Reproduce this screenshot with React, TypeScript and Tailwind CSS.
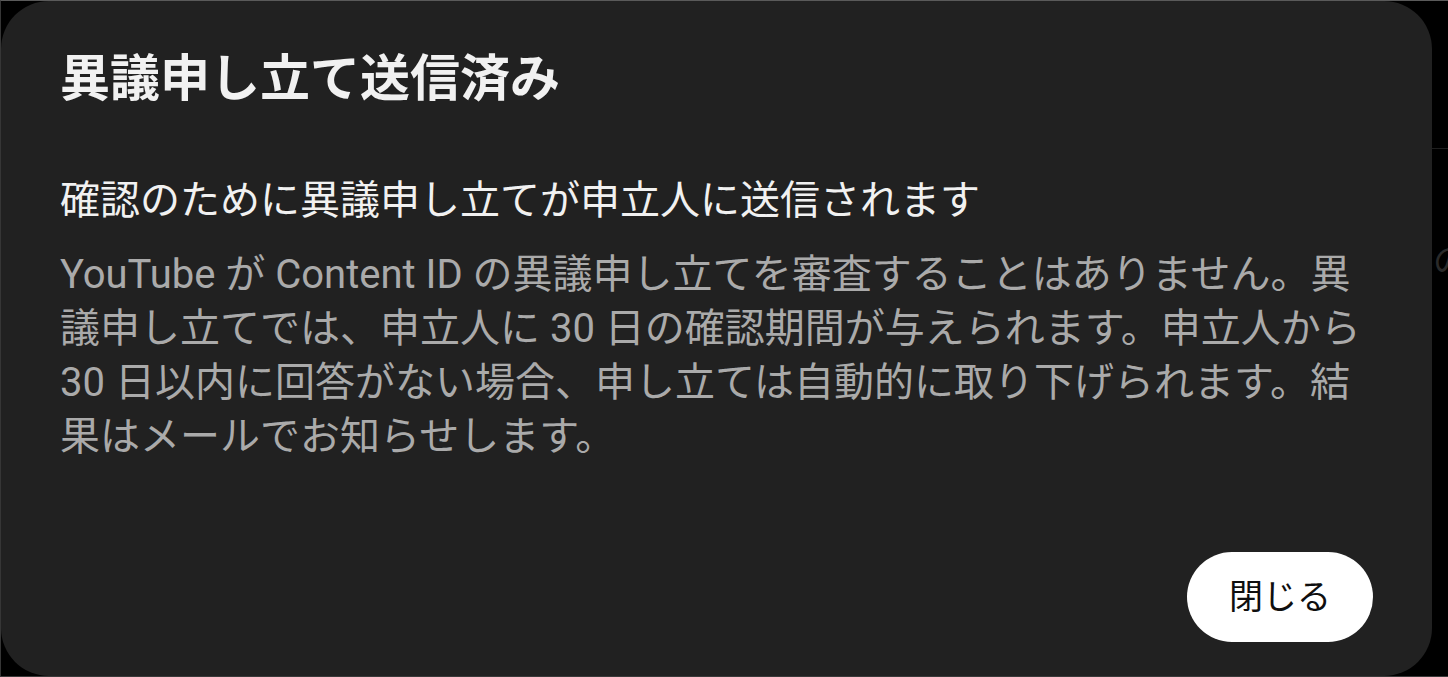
import React from 'react';

const App: React.FC = () => {
  return (
    <div className="w-[1448px] h-[677px] bg-black flex overflow-hidden border-t border-l border-b border-t-[#5a5a5a] border-l-[#363636] border-b-[#3a3a3a] font-[Roboto,'Noto_Sans_CJK_JP',sans-serif]">
      {/* Dialog */}
      <div className="w-[1431px] shrink-0 h-full rounded-[48px] bg-[#212121] flex flex-col pl-[59px] pr-[59px]">
        <h2 className="mt-[47px] text-[50px] leading-[62px] font-bold text-[#f1f1f1]">
          異議申し立て送信済み
        </h2>
        <p className="mt-[64px] text-[40px] leading-[54px] text-[#f1f1f1]">
          確認のために異議申し立てが申立人に送信されます
        </p>
        <p className="mt-[20px] text-[40px] leading-[54px] text-[#aaaaaa]">
          YouTube が Content ID の異議申し立てを審査することはありません。異議申し立てでは、申立人に 30 日の確認期間が与えられます。申立人から 30 日以内に回答がない場合、申し立ては自動的に取り下げられます。結果はメールでお知らせします。
        </p>
        <div className="mt-auto mb-[34px] flex justify-end">
          <button className="w-[186px] h-[90px] rounded-full bg-white text-[#0f0f0f] text-[34px]">
            閉じる
          </button>
        </div>
      </div>

      {/* Page behind the dialog */}
      <div className="flex-1 overflow-hidden">
        <div className="mt-[147px] h-px w-full bg-[#1f1f1f]" />
        <div className="mt-[92px] pl-[1px] whitespace-nowrap text-[34px] leading-[40px] text-[#2a2a2a]">
          の場
        </div>
      </div>
    </div>
  );
};

export default App;
